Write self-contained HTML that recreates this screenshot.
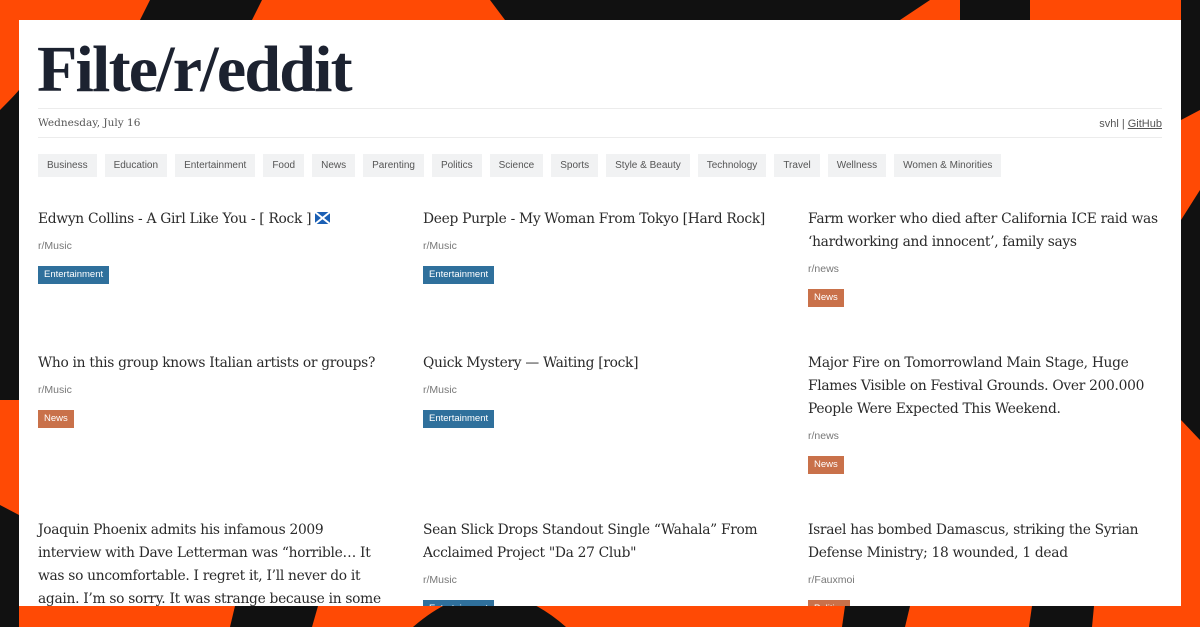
<!DOCTYPE html>
<html><head><meta charset="utf-8"><style>
*{margin:0;padding:0;box-sizing:border-box}
body{width:1200px;height:627px;overflow:hidden;background:#ff4a05;position:relative;font-family:"Liberation Sans",sans-serif}
svg.bg{position:absolute;left:0;top:0}
.card{position:absolute;left:19px;top:20px;width:1162px;height:586px;background:#fff;overflow:hidden}
h1{position:absolute;left:18px;top:12px;font-family:"Liberation Serif",serif;font-weight:bold;font-size:66px;color:#1c2230;letter-spacing:-1.8px}
.hr{position:absolute;left:19px;right:19px;height:1px;background:#ececec}
.date{position:absolute;left:19px;top:97px;font-family:"DejaVu Serif",serif;font-size:10.5px;color:#555}
.links{position:absolute;right:19px;top:98px;font-size:11px;color:#555}
.links u{color:#555}
.tags{position:absolute;left:19px;top:134px;display:flex;gap:8px}
.tags span{background:#f1f2f3;color:#555;font-size:10px;height:23px;line-height:24px;padding:0 9px}
.it{position:absolute;width:352px}
.it h2{font-family:"DejaVu Serif",serif;font-weight:normal;font-size:13.8px;line-height:23px;color:#2a2a2a;letter-spacing:-0.3px}
.it .sub{font-size:10.5px;color:#777;margin-top:9px}
.b{display:inline-block;margin-top:14px;font-size:9.5px;color:#fff;padding:0 6px;height:18px;line-height:18px}
.en{background:#2f709c}.nw{background:#c9714a}
</style></head><body>
<svg class="bg" width="1200" height="627">
<polygon points="150,0 262,0 252,20 140,20" fill="#111"/>
<polygon points="490,0 930,0 900,20 505,20" fill="#111"/>
<polygon points="960,0 1030,0 1030,20 960,20" fill="#111"/>
<path d="M0,110 Q15,95 19,90 L19,400 L0,400Z" fill="#111"/>
<path d="M0,505 L19,515 L19,627 L0,627Z" fill="#111"/>
<path d="M1181,0 L1200,0 L1200,110 L1181,120Z" fill="#111"/>
<path d="M1181,220 L1200,190 L1200,440 L1181,420Z" fill="#111"/>
<polygon points="235,606 318,606 312,627 230,627" fill="#111"/>
<path d="M413,627 Q490,560 566,627Z" fill="#111"/>
<polygon points="845,606 910,606 905,627 842,627" fill="#111"/>
<polygon points="1032,606 1094,606 1092,627 1029,627" fill="#111"/>
</svg>
<div class="card">
<h1>Filte/r/eddit</h1>
<div class="hr" style="top:88px"></div>
<div class="date">Wednesday, July 16</div>
<div class="links">svhl | <u>GitHub</u></div>
<div class="hr" style="top:117px"></div>
<div class="tags"><span>Business</span><span>Education</span><span>Entertainment</span><span>Food</span><span>News</span><span>Parenting</span><span>Politics</span><span>Science</span><span>Sports</span><span>Style &amp; Beauty</span><span>Technology</span><span>Travel</span><span>Wellness</span><span>Women &amp; Minorities</span></div>

<div class="it" style="left:19px;top:188px"><h2>Edwyn Collins - A Girl Like You - [ Rock ] <svg width="15" height="12" style="vertical-align:-1px"><rect width="15" height="12" fill="#1a5fb4"/><path d="M0,0L15,12M15,0L0,12" stroke="#fff" stroke-width="2"/></svg></h2><div class="sub">r/Music</div><span class="b en">Entertainment</span></div>
<div class="it" style="left:404px;top:188px"><h2>Deep Purple - My Woman From Tokyo [Hard Rock]</h2><div class="sub">r/Music</div><span class="b en">Entertainment</span></div>
<div class="it" style="left:789px;top:188px"><h2>Farm worker who died after California ICE raid was ‘hardworking and innocent’, family says</h2><div class="sub">r/news</div><span class="b nw">News</span></div>

<div class="it" style="left:19px;top:332px"><h2>Who in this group knows Italian artists or groups?</h2><div class="sub">r/Music</div><span class="b nw">News</span></div>
<div class="it" style="left:404px;top:332px"><h2>Quick Mystery — Waiting [rock]</h2><div class="sub">r/Music</div><span class="b en">Entertainment</span></div>
<div class="it" style="left:789px;top:332px"><h2>Major Fire on Tomorrowland Main Stage, Huge Flames Visible on Festival Grounds. Over 200.000 People Were Expected This Weekend.</h2><div class="sub">r/news</div><span class="b nw">News</span></div>

<div class="it" style="left:19px;top:499px;width:345px"><h2>Joaquin Phoenix admits his infamous 2009 interview with Dave Letterman was “horrible… It was so uncomfortable. I regret it, I’ll never do it again. I’m so sorry. It was strange because in some</h2></div>
<div class="it" style="left:404px;top:499px"><h2>Sean Slick Drops Standout Single “Wahala” From Acclaimed Project "Da 27 Club"</h2><div class="sub">r/Music</div><span class="b en">Entertainment</span></div>
<div class="it" style="left:789px;top:499px"><h2>Israel has bombed Damascus, striking the Syrian Defense Ministry; 18 wounded, 1 dead</h2><div class="sub">r/Fauxmoi</div><span class="b nw">Politics</span></div>
</div>
</body></html>
